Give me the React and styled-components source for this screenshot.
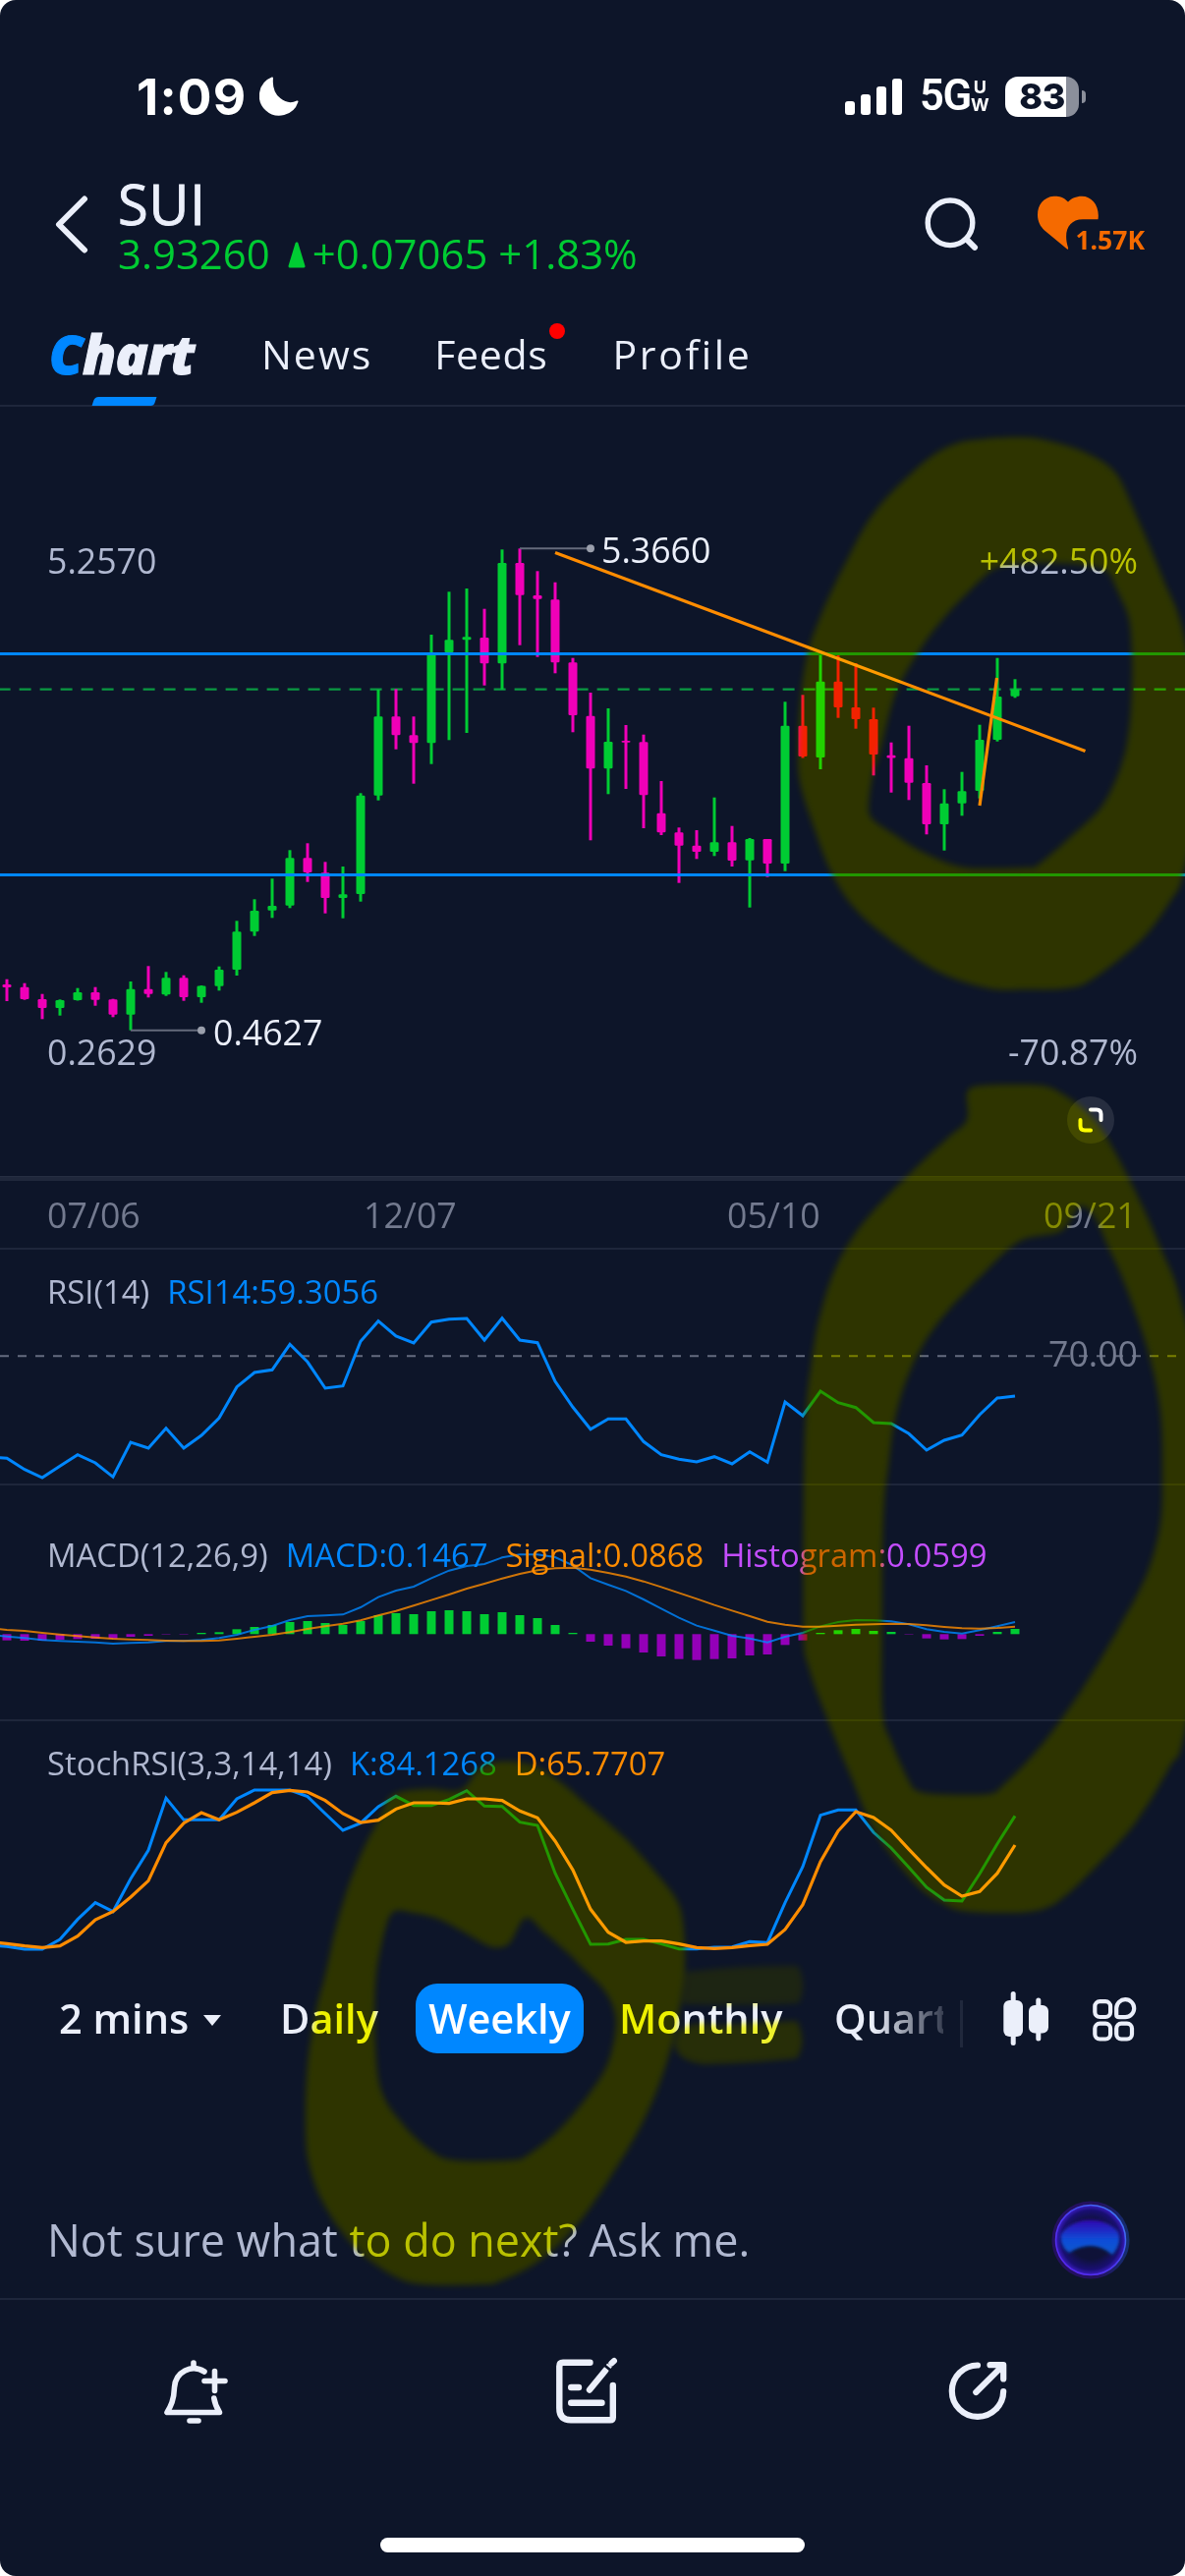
import React from "react";
import styled, { createGlobalStyle } from "styled-components";

const color = {
  bg: "#0d1529",
  text: "#ebeffa",
  soft: "#b0b8d0",
  muted: "#737a8f",
  line: "#1e263b",
  blue: "#0087ff",
  green: "#00cc33",
  magenta: "#f000b8",
  orange: "#ff8c00",
  violet: "#c44dff",
};

const sans = `"Open Sans", "Noto Sans", sans-serif`;

const GlobalStyle = createGlobalStyle`
  body { margin: 0; background: #fff; }
  * { box-sizing: border-box; }
  svg { display: block; flex: none; }
`;

const Phone = styled.main`
  position: relative;
  isolation: isolate;
  display: flex;
  flex-direction: column;
  width: 1206px;
  height: 2622px;
  overflow: hidden;
  border-radius: 16px;
  background: ${color.bg};
  color: ${color.text};
  font-family: ${sans};
`;

/* ---------- status bar ---------- */

const StatusBar = styled.div`
  display: flex;
  align-items: center;
  height: 160px;
  padding: 36px 101px 0 139px;
  font-family: Inter, sans-serif;
  color: #fff;
`;

const Clock = styled.span`
  width: 125px;
  font-size: 51.5px;
  font-weight: 700;
  line-height: 60px;
  letter-spacing: 1.2px;
`;

const StatusRight = styled.div`
  display: flex;
  align-items: center;
  margin-left: auto;
`;

const Network = styled.span`
  margin-left: 18px;
  width: 52px;
  font-family: Roboto, sans-serif;
  font-size: 43.5px;
  font-weight: 600;
  line-height: 50px;
  letter-spacing: -1.4px;
`;

const NetworkSuffix = styled.span`
  display: grid;
  width: 18px;
  justify-items: center;
  font-size: 18px;
  font-weight: 700;
  line-height: 18px;
`;

const Battery = styled.span`
  display: flex;
  align-items: center;
  justify-content: center;
  width: 75px;
  height: 41px;
  margin-left: 17px;
  border-radius: 13px;
  background: linear-gradient(90deg, #fff 62px, #8b8f9b 62px);
  color: ${color.bg};
  font-size: 36px;
  font-weight: 800;
  letter-spacing: -0.5px;
`;

const BatteryTip = styled.span`
  width: 4px;
  height: 13px;
  margin-left: 3px;
  border-radius: 0 8px 8px 0;
  background: #8b8f9b;
`;

/* ---------- header ---------- */

const Header = styled.header`
  display: flex;
  align-items: center;
  height: 146px;
  padding: 0 41px 9px 55px;
`;

const Symbol = styled.div`
  display: flex;
  flex-direction: column;
  gap: 2px;
  margin-left: 28px;
`;

const Ticker = styled.h1`
  margin: 0;
  font-size: 56px;
  font-weight: 400;
  line-height: 56px;
  letter-spacing: 0.8px;
  -webkit-text-stroke: 0.9px ${color.text};
`;

const Quote = styled.div`
  display: flex;
  align-items: center;
  color: ${color.green};
  font-size: 41.9px;
  line-height: 41px;
`;

const HeaderActions = styled.div`
  display: flex;
  align-items: center;
  gap: 59px;
  margin-left: auto;
`;

const Favourite = styled.div`
  display: grid;
  width: 110px;
  height: 60px;
  & > * { grid-area: 1 / 1; }
`;

const FavouriteCount = styled.span`
  align-self: end;
  justify-self: end;
  color: #f56a00;
  font-size: 26.5px;
  font-weight: 700;
  line-height: 30px;
`;

/* ---------- tabs ---------- */

const Tabs = styled.nav`
  display: flex;
  align-items: center;
  height: 108px;
  padding: 2px 0 0 50px;
  border-bottom: 2px solid ${color.line};
`;

const Tab = styled.span`
  position: relative;
  margin-left: ${(p) => p.$gap}px;
  font-size: 41px;
  line-height: 56px;
  letter-spacing: ${(p) => p.$track}px;
`;

const ActiveTab = styled.span`
  position: relative;
  width: 154px;
  font-size: 55px;
  font-style: italic;
  font-weight: 800;
  line-height: 56px;
  letter-spacing: -0.7px;
  -webkit-text-stroke: 1px currentColor;
  &::after {
    content: "";
    position: absolute;
    left: 45px;
    bottom: -25px;
    width: 63px;
    height: 9px;
    border-radius: 4px 0 3px 0;
    transform: skewX(-18deg);
    background: ${color.blue};
  }
`;

const TabLabel = styled.span`
  display: block;
  &::first-letter {
    color: ${color.blue};
    -webkit-text-stroke-color: ${color.blue};
  }
`;

const Dot = styled.i`
  position: absolute;
  top: -3px;
  right: -17px;
  width: 16px;
  height: 16px;
  border-radius: 50%;
  background: #ff0000;
`;

/* ---------- charts ---------- */

const ChartArea = styled.section`
  height: 783px;
  & text {
    font-family: ${sans};
    font-size: 35.7px;
  }
`;

const ScrollTrack = styled.div`
  height: 5px;
  border-top: 1px solid #262e42;
  background: #1f273b;
`;

const DateAxis = styled.div`
  display: grid;
  grid-template-columns: 322px 370px 322px auto;
  align-items: center;
  height: 70px;
  padding: 0 48px;
  border-bottom: 2px solid ${color.line};
  color: ${color.muted};
  font-size: 35.7px;
`;

const Pane = styled.section`
  display: grid;
  height: 240px;
  border-bottom: ${(p) => (p.$last ? 0 : 2)}px solid ${color.line};
  & > * { grid-area: 1 / 1; }
  & text {
    font-family: ${sans};
    font-size: 35.7px;
  }
`;

const Legend = styled.div`
  display: flex;
  gap: 18px;
  padding: ${(p) => p.$top}px 48px 0;
  color: ${color.soft};
  font-size: 32.8px;
  line-height: 40px;
  white-space: nowrap;
`;

const LegendValue = styled.span`
  color: ${(p) => p.$color};
`;

/* ---------- period toolbar ---------- */

const Toolbar = styled.div`
  display: flex;
  align-items: center;
  height: 125px;
  padding-left: 60px;
  font-size: 41.5px;
  font-weight: 600;
  line-height: 71px;
  white-space: nowrap;
`;

const Period = styled.span`
  flex: none;
  display: flex;
  align-items: center;
  width: ${(p) => p.$width}px;
`;

const ActivePeriod = styled.span`
  flex: none;
  width: 171px;
  margin-right: 36px;
  border-radius: 22px;
  background: ${color.blue};
  color: #fff;
  text-align: center;
`;

const ClippedPeriod = styled.span`
  flex: none;
  width: 111px;
  overflow: hidden;
  mask-image: linear-gradient(90deg, #000 35%, rgba(0, 0, 0, 0.2) 100%);
`;

const Caret = styled.i`
  margin: 3px 0 0 15px;
  border: 9.5px solid transparent;
  border-top: 11px solid ${color.text};
  border-bottom: 0;
`;

const Separator = styled.i`
  width: 3px;
  height: 48px;
  margin: 10px 40px 0 17px;
  background: #20283c;
`;

/* ---------- assistant and footer ---------- */

const Assistant = styled.div`
  display: flex;
  align-items: center;
  justify-content: space-between;
  height: 121px;
  margin-top: 103px;
  padding: 0 56px 0 48px;
  border-bottom: 2px solid ${color.line};
  color: ${color.soft};
  font-size: 44.9px;
`;

const Actions = styled.footer`
  display: flex;
  justify-content: space-between;
  padding: 57px 176px 0 162px;
`;

const HomeIndicator = styled.i`
  width: 432px;
  height: 15px;
  margin: auto auto 24px;
  border-radius: 8px;
  background: #fff;
`;

const MarkerLayer = styled.svg`
  position: absolute;
  inset: 0;
  pointer-events: none;
  mix-blend-mode: ${(p) => p.$blend};
  opacity: ${(p) => p.$opacity};
`;

/* ---------- data ---------- */

const candleX = (i) => 7 + 18 * i;

/* direction, high, body top, body bottom, low */
const candles = [
  "d 996.7 1002 1005 1019", "d 1000.7 1004.7 1017 1017.7", "d 1011.7 1017 1026 1037.3",
  "u 1017.3 1018 1026 1033.7", "u 1005.7 1010 1018 1018.5", "d 1004.7 1010 1017.7 1023.7",
  "d 1016.7 1017.3 1032.7 1035.3", "u 999 1006.7 1032.7 1048.7", "d 983.3 1006.7 1011.7 1015.3",
  "u 989.3 995.3 1012.3 1013.7", "d 992.7 995.3 1015 1018.7", "u 1003 1003.5 1015 1020.7",
  "u 983.7 987 1003.7 1008.3", "u 937.3 948.3 987 993", "u 915.3 927 948.3 952.7",
  "u 894.3 922 926.7 934.3", "u 865.3 873.3 921.7 924.3", "d 858.3 873.3 888 897.7",
  "d 877.3 888.3 914 929.7", "u 882 910.3 914 934.7", "u 807.3 809.7 910 917.7",
  "u 702 729.3 809.7 814.7", "d 701.3 729.3 748.3 762.7", "d 729.3 748.3 756.3 797.7",
  "u 646 665 756.3 777.7", "u 602.3 651.3 664 753.3", "u 599 648.3 651.3 746",
  "d 619.7 649 675.3 697.7", "u 559.3 573 675.3 701.7", "d 558.3 573 605.7 656.7",
  "d 581.3 606 609.7 668.7", "d 592.7 610.3 674.3 685.3", "d 669.7 674.3 728 745.3",
  "d 705 728.7 782.3 855.3", "u 721 755 782.3 808.3", "d 738 754 755.7 803",
  "d 747.7 755.3 809.3 843", "d 795 827.7 847.3 850", "d 842.3 847.3 860.7 898.7",
  "d 845 860.7 867 874.3", "u 811.7 857.3 867 871.3", "d 840.7 857.3 876 882",
  "u 853 854 875.7 923.7", "d 854 854 879 892.7", "u 714.3 738.7 879 886.7",
  "d 707.3 738.7 770 771.5", "u 666.7 693.7 771 783", "d 666.7 693.7 720 730.7",
  "d 675 720 732 741.7", "d 720.3 732 768 789.3", "d 755.7 768.7 771.5 806.7",
  "d 738.7 771.7 796.7 814.3", "d 779 797 839 849.3", "u 803.3 817.7 839 865.7",
  "u 785.7 805.3 817.7 830.3", "u 737.7 753 805 812.7", "u 669.7 709 753 754.7",
  "u 691.3 701.7 708.7 710.3",
].map((row) => {
  const [dir, ...v] = row.split(" ");
  return { up: dir === "u", v: v.map(Number) };
});

const rsi = [
  374.3, 385.7, 394, 382.3, 370.7, 379, 393.3, 358, 364, 343.7, 364, 351, 333.3, 301.7, 287, 284.3,
  258.3, 276.3, 303, 300.7, 255.3, 234.7, 250, 257, 235.7, 232.7, 232, 254, 231.7, 254, 256.7, 296,
  322.3, 344.7, 334.3, 334.3, 357.3, 370.7, 375.3, 378, 372.7, 380, 367.7, 378.3, 317, 331, 306,
  317.7, 322.7, 338, 339, 349.3, 366, 356, 350.7, 330, 313, 311,
].map((v) => v + 1110);

const third = (v) => 1530 + v / 3;

const histogram = [
  419, 420, 420, 417, 415, 414, 414, 408, 405, 402, 402, 396, 394, 385, 378, 372, 363, 360, 366, 372,
  360, 342, 336, 339, 330, 327, 330, 339, 333, 342, 351, 372, 396, 423, 435, 443, 456, 468, 476, 479,
  476, 474, 465, 462, 433, 419, 396, 388, 384, 390, 393, 402, 413, 416, 415, 405, 393, 384,
].map(third);

const macd = [
  407, 412, 418, 421, 423, 425, 429, 427, 425, 421, 421, 418, 412, 402, 387, 375, 357, 345, 343, 340,
  318, 287, 267, 255, 229, 206, 192, 186, 166, 157, 157, 165, 190, 229, 249, 268, 294, 322, 350, 374,
  389, 405, 413, 425, 408, 396, 376, 363, 357, 358, 361, 370, 385, 393, 398, 388, 376, 363,
].map(third);

const signal = [
  387, 390, 396, 401, 406, 410, 414, 416, 418, 420, 421, 421, 419, 414, 408, 402, 394, 384, 376, 368,
  358, 343, 329, 313, 296, 279, 261, 246, 230, 216, 205, 199, 197, 203, 213, 224, 239, 256, 274, 292,
  311, 328, 345, 362, 371, 377, 377, 374, 371, 370, 368, 369, 373, 378, 382, 383, 381, 377,
].map(third);

const stochK = [
  1354, 1362, 1362, 1332, 1271, 1220, 1247, 1147, 1060, 901, 967, 967, 967, 903, 876, 876, 876, 896,
  948, 999, 977, 927, 895, 923, 923, 905, 878, 925, 926, 974, 984, 1130, 1240, 1347, 1346, 1332, 1332,
  1346, 1361, 1361, 1356, 1355, 1339, 1342, 1220, 1110, 953, 937, 937, 1005, 1053, 1112, 1173, 1212,
  1215, 1132, 1040, 955,
].map(third);

const stochD = [
  1345, 1352, 1357, 1352, 1322, 1272, 1247, 1203, 1153, 1037, 977, 945, 967, 944, 915, 884, 877, 882,
  908, 948, 975, 968, 934, 915, 915, 917, 903, 903, 908, 940, 961, 1032, 1120, 1240, 1310, 1341, 1337,
  1337, 1346, 1357, 1360, 1357, 1351, 1347, 1302, 1226, 1095, 1001, 942, 960, 999, 1057, 1113, 1166,
  1200, 1186, 1130, 1044,
].map(third);

const Series = ({ data, stroke, width = 3, opacity = 1 }) => (
  <polyline
    points={[`-4,${data[0] - 1}`, ...data.map((y, i) => `${candleX(i)},${y}`)].join(" ")}
    fill="none"
    stroke={stroke}
    strokeWidth={width}
    opacity={opacity}
  />
);

/* ---------- highlighter strokes ---------- */

const smooth = (flat) => {
  const p = [];
  for (let i = 0; i < flat.length; i += 2) p.push([flat[i], flat[i + 1]]);
  const n = p.length;
  let d = `M${p[0][0]} ${p[0][1]}`;
  for (let i = 0; i < n; i++) {
    const [a, b, c, e] = [p[(i + n - 1) % n], p[i], p[(i + 1) % n], p[(i + 2) % n]];
    d += `C${b[0] + (c[0] - a[0]) / 6} ${b[1] + (c[1] - a[1]) / 6} ${c[0] - (e[0] - b[0]) / 6} ${c[1] - (e[1] - b[1]) / 6} ${c[0]} ${c[1]}`;
  }
  return d + "Z";
};

const strokes = [
  [
    [1037, 445, 1000, 447, 972, 452, 941, 470, 891, 520, 857, 580, 834, 630, 822, 665, 814.5, 713, 812, 767,
      815, 800, 830, 847, 847, 890, 872, 927, 911, 960, 957, 990, 1007, 1006, 1045, 1007, 1084, 1006, 1111, 997,
      1161, 957, 1191, 917, 1205, 887, 1225, 780, 1206, 650, 1184, 590, 1153, 517, 1134, 480, 1103, 460, 1064, 448],
    [1076, 573, 1045, 573, 1014, 578, 988, 600, 957, 633, 934, 665, 911, 707, 895, 767, 888, 790, 884, 820, 888, 834,
      911, 850, 938, 867, 976, 882, 1010, 884, 1045, 883, 1057, 880, 1095, 847, 1122, 820, 1141, 780, 1149, 743,
      1152, 700, 1152, 665, 1149, 630, 1138, 603, 1126, 581, 1103, 575],
  ],
  [
    [1025, 1104, 992, 1106, 984, 1114, 984, 1140, 965, 1158, 938, 1183, 885, 1237, 854, 1283, 835, 1337, 825, 1393,
      820, 1443, 818, 1527, 818, 1663, 823, 1697, 841, 1747, 868, 1813, 888, 1860, 911, 1893, 938, 1923, 961, 1938,
      980, 1945, 1016, 1947, 1053, 1945, 1080, 1933, 1122, 1893, 1157, 1853, 1191, 1797, 1206, 1763, 1250, 1550,
      1206, 1340, 1181, 1270, 1154, 1210, 1123, 1153, 1100, 1127, 1077, 1111, 1060, 1105],
    [1098, 1228, 1080, 1253, 1038, 1263, 1000, 1297, 954, 1347, 927, 1393, 911, 1443, 904, 1493, 900, 1527,
      898, 1580, 897.6, 1660, 898, 1743, 907, 1773, 926, 1815, 934, 1823, 949, 1826, 980, 1827, 1007, 1826,
      1018, 1820, 1057, 1780, 1099, 1723, 1141, 1653, 1168, 1600, 1181, 1550, 1183, 1500, 1181, 1437,
      1169, 1377, 1146, 1310, 1127, 1267, 1113, 1237],
  ],
  [
    [400, 1827, 435, 1821, 465, 1823, 477, 1815, 488, 1800, 511, 1793, 542, 1797, 569, 1813, 603, 1842, 638, 1873,
      668, 1907, 688, 1933, 695, 1957, 697, 2000, 692, 2041, 681, 2091, 658, 2152, 623, 2213, 585, 2267, 546, 2303,
      508, 2322, 490, 2325, 431, 2325, 400, 2316, 361, 2287, 331, 2246, 315, 2205, 311, 2164, 313, 2103, 321, 2050,
      331, 2010, 346, 1947, 365, 1893, 385, 1853],
    [399, 1947, 420, 1947, 446, 1953, 473, 1967, 496, 1980, 508, 1982, 519, 1977, 535, 1952, 554, 1967, 577, 1987,
      598, 2008, 612, 2022, 623, 2040, 627, 2062, 619, 2099, 600, 2131, 569, 2168, 538, 2193, 520, 2199, 463, 2199,
      438, 2189, 408, 2160, 388, 2128, 382, 2082, 382, 2021, 388, 1980],
  ],
];

const Marker = ({ blend, opacity, id }) => (
  <MarkerLayer $blend={blend} $opacity={opacity} width="1206" height="2622" viewBox="0 0 1206 2622">
    <filter id={id} x="-5%" y="-5%" width="110%" height="110%">
      <feGaussianBlur stdDeviation="3" />
    </filter>
    <g fill="#ffff00" filter={`url(#${id})`}>
      {strokes.map((loops, i) => (
        <path key={i} d={loops.map(smooth).join("")} fillRule="evenodd" />
      ))}
      <path d="M698 2007Q760 2000 812 2001Q822 2020 813 2039Q760 2042 694 2040Z" opacity="0.5" />
      <path d="M690 2068Q704 2056 730 2062L811 2057Q822 2078 811 2095Q760 2100 716 2101Q686 2097 687 2078Z" opacity="0.8" />
    </g>
  </MarkerLayer>
);

/* ---------- page ---------- */

export default function App() {
  return (
    <>
      <GlobalStyle />
      <Phone>
        <StatusBar>
          <Clock>1:09</Clock>
          <svg width="40" height="40" viewBox="0 0 40 40">
            <path d="M13 1.5A19.3 19.3 0 1 0 38.5 25.5C27 31 11 21 13 1.5Z" fill="#fff" stroke="#fff" strokeWidth="2" strokeLinejoin="round" />
          </svg>
          <StatusRight>
            <svg width="58" height="38" viewBox="0 0 58 38" fill="#fff">
              <rect x="0" y="24" width="10" height="14" rx="3" />
              <rect x="16" y="17" width="10" height="21" rx="3" />
              <rect x="32" y="9" width="10" height="29" rx="3" />
              <rect x="48" y="1" width="10" height="37" rx="3" />
            </svg>
            <Network>5G</Network>
            <NetworkSuffix>
              <span>U</span>
              <span>W</span>
            </NetworkSuffix>
            <Battery>83</Battery>
            <BatteryTip />
          </StatusRight>
        </StatusBar>

        <Header>
          <svg width="37" height="62" viewBox="0 0 37 62" fill="none" stroke={color.text} strokeWidth="6" strokeLinecap="round" strokeLinejoin="round">
            <path d="M31 4.500L5 30.500L31 56.500" />
          </svg>
          <Symbol>
            <Ticker>SUI</Ticker>
            <Quote>
              3.93260
              <svg width="18" height="27" viewBox="0 0 18 27" style={{ margin: "4px 7px 0 18px" }}>
                <path d="M9 2L16 25H2Z" fill={color.green} stroke={color.green} strokeWidth="3" strokeLinejoin="round" />
              </svg>
              +0.07065 +1.83%
            </Quote>
          </Symbol>
          <HeaderActions>
            <svg width="56" height="56" viewBox="0 0 56 56" fill="none" stroke={color.text}>
              <circle cx="27" cy="25.800" r="22.8" strokeWidth="5.4" />
              <path d="M43.5 42.300L52 50.800" strokeWidth="6" strokeLinecap="round" />
            </svg>
            <Favourite>
              <svg width="64" height="56" viewBox="1056 202 64 56">
                <path
                  d="M1088 208.5C1083 203 1077 202.500 1073.500 202.800C1063 203.500 1057 212 1057 221.500C1057 229 1060 233.500 1064 237.500L1087 256.500Q1088.500 257.500 1088 255C1083 239 1088 226.500 1103 226.300H1118.500C1120.500 213 1112.500 202.800 1102 202.800C1096 202.800 1091.500 205 1088 208.500Z"
                  fill="#f56a00"
                />
              </svg>
              <FavouriteCount>1.57K</FavouriteCount>
            </Favourite>
          </HeaderActions>
        </Header>

        <Tabs>
          <ActiveTab><TabLabel>Chart</TabLabel></ActiveTab>
          <Tab $gap={62} $track={2}>News</Tab>
          <Tab $gap={63} $track={0.7}>Feeds<Dot /></Tab>
          <Tab $gap={66} $track={2.6}>Profile</Tab>
        </Tabs>

        <ChartArea>
          <svg width="1206" height="783" viewBox="0 414 1206 783">
            <path d="M-1.4 701.7H1206" stroke="#0a9a42" strokeWidth="2.2" strokeDasharray="12 9" />
            {candles.map(({ up, v }, i) => (
              <g key={i} fill={up ? color.green : color.magenta}>
                <rect x={candleX(i) - 1.5} y={v[0]} width="3" height={v[3] - v[0]} />
                <rect x={candleX(i) - 4.5} y={v[1]} width="9" height={Math.max(v[2] - v[1], 1.5)} rx="1.3" />
              </g>
            ))}
            <path d="M0 665.500H1206M0 890.500H1206" stroke={color.blue} strokeWidth="3" />
            <path d="M565 562.500L1104.500 764.500M1014.500 690L997 820" stroke={color.orange} strokeWidth="3.2" />
            <path d="M529 558.300H601M133 1048.700H205" stroke="#646a7b" strokeWidth="2" />
            <circle cx="601" cy="558.300" r="4" fill="#9a9fac" />
            <circle cx="205" cy="1048.700" r="4" fill="#9a9fac" />
            <text x="612" y="572.800" fill={color.text}>5.3660</text>
            <text x="217" y="1063.500" fill={color.text}>0.4627</text>
            <g fill={color.soft}>
              <text x="48" y="583.500">5.2570</text>
              <text x="48" y="1083.800">0.2629</text>
              <text x="1158" y="583.500" textAnchor="end">+482.50%</text>
              <text x="1158" y="1083.800" textAnchor="end">-70.87%</text>
            </g>
            <circle cx="1110" cy="1140" r="24" fill="#262d3f" />
            <path d="M1110 1129.500H1116Q1120.500 1129.500 1120.500 1134V1140M1099.500 1140V1146Q1099.500 1150.500 1104 1150.500H1110" fill="none" stroke="#fff" strokeWidth="4" strokeLinecap="round" />
          </svg>
        </ChartArea>
        <ScrollTrack />
        <DateAxis>
          <span>07/06</span>
          <span>12/07</span>
          <span>05/10</span>
          <span>09/21</span>
        </DateAxis>

        <Pane>
          <svg width="1206" height="238" viewBox="0 1272 1206 238">
            <path d="M0 1380.300H1206" stroke="#646b7f" strokeWidth="2" strokeDasharray="9 9" />
            <Series data={rsi} stroke={color.blue} />
            <text x="1158" y="1391" textAnchor="end" fill={color.muted}>70.00</text>
          </svg>
          <Legend $top={23}>
            <span>RSI(14)</span>
            <LegendValue $color={color.blue}>RSI14:59.3056</LegendValue>
          </Legend>
        </Pane>

        <Pane>
          <svg width="1206" height="238" viewBox="0 1512 1206 238">
            {histogram.map((y, i) => {
              const base = 1663.3;
              const up = y < base;
              return (
                <rect
                  key={i}
                  x={candleX(i) - 4.5}
                  y={Math.min(y, base)}
                  width="9"
                  height={Math.abs(y - base)}
                  fill={up ? color.green : "#9400b8"}
                  opacity={Math.abs(y - base) < 1 && !up ? 0.6 : 1}
                />
              );
            })}
            <Series data={macd} stroke={color.blue} width={2} opacity={0.8} />
            <Series data={signal} stroke={color.orange} width={2} opacity={0.8} />
          </svg>
          <Legend $top={51}>
            <span>MACD(12,26,9)</span>
            <LegendValue $color={color.blue}>MACD:0.1467</LegendValue>
            <LegendValue $color={color.orange}>Signal:0.0868</LegendValue>
            <LegendValue $color={color.violet}>Histogram:0.0599</LegendValue>
          </Legend>
        </Pane>

        <Pane $last>
          <svg width="1206" height="240" viewBox="0 1752 1206 240">
            <Series data={stochK} stroke={color.blue} />
            <Series data={stochD} stroke={color.orange} width={3.2} />
          </svg>
          <Legend $top={22.5}>
            <span>StochRSI(3,3,14,14)</span>
            <LegendValue $color={color.blue}>K:84.1268</LegendValue>
            <LegendValue $color={color.orange}>D:65.7707</LegendValue>
          </Legend>
        </Pane>

        <Toolbar>
          <Period $width={225}>2 mins<Caret /></Period>
          <Period $width={138}>Daily</Period>
          <ActivePeriod>Weekly</ActivePeriod>
          <Period $width={219}>Monthly</Period>
          <ClippedPeriod>Quarterly</ClippedPeriod>
          <Separator />
          <svg width="48" height="56" viewBox="1020 2027 48 56" fill={color.text}>
            <rect x="1021.3" y="2036" width="19.7" height="37" rx="6" />
            <rect x="1028.700" y="2027" width="5" height="55" rx="2.500" />
            <rect x="1047" y="2041" width="20" height="28.500" rx="6" />
            <rect x="1054.300" y="2033.500" width="5" height="44" rx="2.500" />
          </svg>
          <svg width="48" height="48" viewBox="1110 2030 48 48" fill="none" stroke={color.text} strokeWidth="4.2" style={{ marginLeft: 42 }}>
            <rect x="1114.300" y="2036.200" width="15.800" height="15.800" rx="5" />
            <rect x="1114.300" y="2058.700" width="15.800" height="15.800" rx="5" />
            <rect x="1136.200" y="2058.700" width="15.800" height="15.800" rx="5" />
            <path d="M1136.200 2043A9 9 0 1 1 1145.200 2052.200H1139Q1136.200 2052.200 1136.200 2049.500Z" />
          </svg>
        </Toolbar>

        <Assistant>
          <span>Not sure what to do next? Ask me.</span>
          <svg width="80" height="80" viewBox="-40 -40 80 80">
            <defs>
              <radialGradient id="orb-core">
                <stop offset="0.55" stopColor="#0f1238" />
                <stop offset="0.85" stopColor="#190f72" />
                <stop offset="1" stopColor="#3b1cc4" />
              </radialGradient>
              <linearGradient id="orb-rim" x1="0" y1="1" x2="1" y2="0">
                <stop offset="0" stopColor="#5a22ee" />
                <stop offset="0.5" stopColor="#4a3af0" />
                <stop offset="1" stopColor="#3a8af5" />
              </linearGradient>
              <linearGradient id="orb-halo" x1="0" y1="0" x2="1" y2="0">
                <stop offset="0" stopColor="#24105f" />
                <stop offset="0.6" stopColor="#24105f" />
                <stop offset="1" stopColor="#143070" />
              </linearGradient>
              <linearGradient id="orb-wave" x1="0" y1="0" x2="0" y2="1">
                <stop offset="0" stopColor="#3006b0" />
                <stop offset="0.6" stopColor="#0d4fd8" />
                <stop offset="1" stopColor="#0a55c8" />
              </linearGradient>
              <filter id="orb-soft"><feGaussianBlur stdDeviation="1.4" /></filter>
            </defs>
            <circle r="39.500" fill="url(#orb-halo)" />
            <circle r="35.500" fill="url(#orb-core)" stroke="url(#orb-rim)" strokeWidth="1.500" />
            <path d="M-30 -6C-16 -26 16 -24 28 -8Q32 4 22 15Q2 -2 -22 13Q-32 6 -30 -6Z" fill="url(#orb-wave)" filter="url(#orb-soft)" />
          </svg>
        </Assistant>

        <Actions>
          <svg width="74" height="72" viewBox="162 2398 74 72" fill="none" stroke={color.text} strokeWidth="5.6" strokeLinecap="round" strokeLinejoin="round">
            <path d="M197 2405V2410M208 2414C195 2406 178.500 2414 177.500 2430C177 2443 174 2449 170 2455.500H223.500C220 2450 218.500 2446 217.800 2441" />
            <path d="M193 2464H202M208 2423.500H229M218.500 2413.500V2433.500" />
          </svg>
          <svg width="74" height="72" viewBox="561 2398 74 72" fill="none" stroke={color.text} strokeWidth="6.400" strokeLinecap="round" strokeLinejoin="round">
            <path d="M600.500 2404.800H573Q569.300 2404.800 569.300 2408.500V2451Q569.300 2463.300 581 2463.300H621Q623.800 2463.300 623.800 2460.500V2428" />
            <path d="M581.200 2430H589M581.200 2445.800H612.500" />
            <path d="M600 2432.500L616 2413" />
            <path d="M617 2411.500L620.500 2407.300" strokeWidth="6" strokeLinecap="butt" />
            <path d="M622.300 2405.500L625 2403" strokeWidth="6" />
            <path d="M614 2406.500L622.500 2413.500" stroke={color.bg} strokeWidth="2.800" strokeLinecap="butt" />
          </svg>
          <svg width="70" height="72" viewBox="960 2398 70 72" fill="none" stroke={color.text} strokeWidth="6.200" strokeLinecap="round" strokeLinejoin="round">
            <path d="M995 2407.500A26.200 26.200 0 1 0 1021.200 2434" />
            <path d="M993.300 2435L1019 2409.500M1007.500 2407.200H1021.200V2421.500" />
          </svg>
        </Actions>

        <HomeIndicator />

        <Marker id="marker-tint" blend="multiply" opacity={1} />
        <Marker id="marker-glow" blend="normal" opacity={0.135} />
      </Phone>
    </>
  );
}
